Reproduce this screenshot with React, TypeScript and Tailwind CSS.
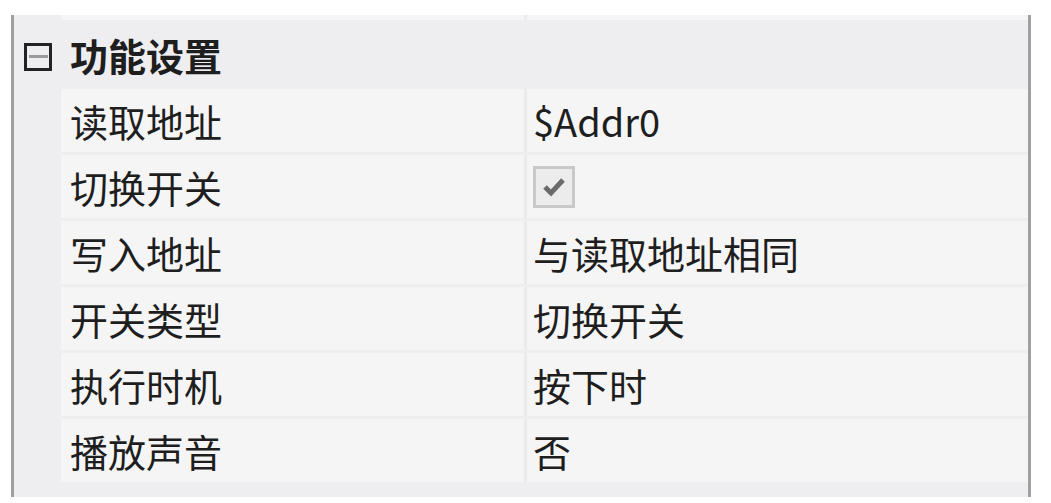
const ROWS: { name: string; value: string | boolean }[] = [
  { name: '读取地址', value: '$Addr0' },
  { name: '切换开关', value: true },
  { name: '写入地址', value: '与读取地址相同' },
  { name: '开关类型', value: '切换开关' },
  { name: '执行时机', value: '按下时' },
  { name: '播放声音', value: '否' },
];

function CheckBox() {
  return (
    <div className="w-[42px] h-[42px] border-[3px] border-[#c9c9c9] bg-[#ececec] flex items-center justify-center">
      <svg width="26" height="26" viewBox="0 0 26 26">
        <path d="M4 13 L10 19 L22 6" fill="none" stroke="#6b6b6b" strokeWidth="5" strokeLinejoin="miter" />
      </svg>
    </div>
  );
}

export default function App() {
  return (
    <div
      className="w-[1051px] h-[503px] bg-white pt-[15px] pl-[11px] text-[38px] leading-none text-[#1e1e1e]"
      style={{ fontFamily: '"Noto Sans CJK SC", "Noto Sans", sans-serif' }}
    >
      <div className="w-[1020px] h-[482px] border-x-[3px] border-[#a0a0a0] bg-[#eeeef1] flex flex-col">
        {/* 上一行的尾部 */}
        <div className="flex h-[5px] shrink-0">
          <div className="w-[47px]" />
          <div className="flex-1 flex bg-[#f5f5f5]">
            <div className="w-[463px]" />
            <div className="w-[3px] bg-[#ebebeb]" />
          </div>
        </div>

        {/* 分类 */}
        <div className="h-[69px] shrink-0 flex items-center pl-[10px]">
          <div className="w-[28px] h-[28px] mt-[4px] border-[3px] border-[#222] flex items-center justify-center">
            <div className="w-[19px] h-[3px] bg-[#9a9a9a]" />
          </div>
          <span className="ml-[18px] font-bold">功能设置</span>
        </div>

        {/* 属性行 */}
        <div className="flex flex-col gap-[3px]">
          {ROWS.map((row) => (
            <div key={row.name} className="flex h-[63px]">
              <div className="w-[47px]" />
              <div className="flex-1 flex bg-[#f5f5f5]">
                <div className="w-[463px] flex items-center pl-[9px]">{row.name}</div>
                <div className="w-[3px] bg-[#ebebeb]" />
                <div className="flex-1 flex items-center pl-[6px]">
                  {typeof row.value === 'boolean' ? <CheckBox /> : row.value}
                </div>
              </div>
            </div>
          ))}
        </div>
      </div>
    </div>
  );
}
